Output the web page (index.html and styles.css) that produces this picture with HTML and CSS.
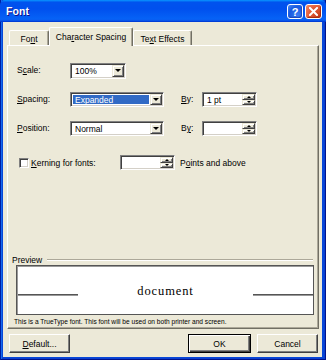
FILE: index.html
```html
<!DOCTYPE html>
<html>
<head>
<meta charset="utf-8">
<link rel="stylesheet" href="styles.css">
</head>
<body>
<div class="window">
  <div class="titlebar">
    <span class="title">Font</span>
    <div class="tb-buttons">
      <span class="tb-btn help">?</span>
      <span class="tb-btn close">
        <svg width="9" height="9" viewBox="0 0 9 9"><path d="M1 1 L8 8 M8 1 L1 8" stroke="#fff" stroke-width="2" stroke-linecap="square"/></svg>
      </span>
    </div>
  </div>
  <div class="body">
    <div class="tabs">
      <div class="tab tab-font">Fo<u>n</u>t</div>
      <div class="tab tab-char active">Cha<u>r</u>acter Spacing</div>
      <div class="tab tab-fx">Te<u>x</u>t Effects</div>
    </div>
    <div class="panel">
      <div class="form">
        <label class="lbl">S<u>c</u>ale:</label>
        <div class="combo combo-short"><span class="val">100%</span><span class="drop"><i class="tri-down"></i></span></div>
        <span></span><span></span><span></span>

        <label class="lbl"><u>S</u>pacing:</label>
        <div class="combo"><span class="val sel">Expanded</span><span class="drop"><i class="tri-down"></i></span></div>
        <span></span>
        <label class="lbl"><u>B</u>y:</label>
        <div class="spin"><span class="val">1 pt</span><span class="spin-btns"><span class="sb"><i class="tri-up"></i></span><span class="sb"><i class="tri-down"></i></span></span></div>

        <label class="lbl"><u>P</u>osition:</label>
        <div class="combo"><span class="val">Normal</span><span class="drop"><i class="tri-down"></i></span></div>
        <span></span>
        <label class="lbl">B<u>y</u>:</label>
        <div class="spin"><span class="val"></span><span class="spin-btns"><span class="sb"><i class="tri-up"></i></span><span class="sb"><i class="tri-down"></i></span></span></div>
      </div>

      <div class="kerning">
        <span class="check"></span>
        <label class="klbl"><u>K</u>erning for fonts:</label>
        <div class="spin"><span class="val"></span><span class="spin-btns"><span class="sb"><i class="tri-up"></i></span><span class="sb"><i class="tri-down"></i></span></span></div>
        <span class="plbl">P<u>o</u>ints and above</span>
      </div>

      <div class="preview-group">
        <div class="group-head"><span class="gtitle">Preview</span><span class="groove"></span></div>
        <div class="preview-box">
          <span class="pline"></span>
          <span class="doc">document</span>
          <span class="pline"></span>
        </div>
        <div class="note">This is a TrueType font. This font will be used on both printer and screen.</div>
      </div>
    </div>
    <div class="buttons">
      <button class="btn btn-default"><u>D</u>efault...</button>
      <span class="spacer"></span>
      <button class="btn btn-ok">OK</button>
      <button class="btn btn-cancel">Cancel</button>
    </div>
  </div>
</div>
</body>
</html>
```

FILE: styles.css
```css
html, body {
  margin: 0;
  padding: 0;
  background: #ffffff;
}
body {
  font-family: "Liberation Sans", Arial, sans-serif;
  font-size: 8.5px;
  color: #000;
}
u { text-decoration: underline; text-underline-offset: 1px; }

.window {
  width: 326px;
  height: 360px;
  box-sizing: border-box;
  display: flex;
  flex-direction: column;
  background: #0847d8;
  box-shadow: inset 1px 0 #001ea0, inset -1px -1px #00138c, inset 2px 0 #166aee, inset -2px -2px #0a3fd0;
}

.titlebar {
  height: 22px;
  flex: none;
  display: flex;
  align-items: center;
  justify-content: space-between;
  padding: 0 4px 0 6px;
  background: linear-gradient(180deg, #0997ff, #0053ee 10%, #0050ee 40%, #0662f6 85%, #0a5cf0 92%, #003dd7 97%, #003dd7);
  border-radius: 5px 5px 0 0;
}
.title {
  color: #fff;
  font-weight: bold;
  font-size: 10.5px;
  text-shadow: 1px 1px #0f1089;
  letter-spacing: 0.1px;
}
.tb-buttons {
  display: flex;
  gap: 2px;
  align-items: center;
  padding-top: 1px;
}
.tb-btn {
  width: 14px;
  height: 13px;
  border: 1px solid #fff;
  border-radius: 3px;
  display: flex;
  align-items: center;
  justify-content: center;
  color: #fff;
  font-weight: bold;
  font-size: 11px;
  font-family: "Liberation Sans", Arial, sans-serif;
}
.help {
  background: radial-gradient(circle at 70% 80%, #3a7bf2, #1759e0 60%, #4d8cf6);
  box-shadow: inset -1px -1px 1px #1d46b8;
  width: 14px;
}
.close {
  background: radial-gradient(circle at 80% 80%, #c8401e, #e45c37 55%, #f08c6a);
  box-shadow: inset -1px -1px 1px #a02a10;
  width: 15px;
}

.body {
  flex: 1;
  margin: 0 4px 3px 3px;
  background: #ece9d8;
  padding: 5px 3px 0 4px;
  display: flex;
  flex-direction: column;
}

.tabs {
  display: flex;
  align-items: flex-end;
  height: 18px;
  padding-left: 2px;
  position: relative;
  z-index: 2;
}
.tab {
  height: 15px;
  box-sizing: border-box;
  display: flex;
  align-items: center;
  justify-content: center;
  background: #ece9d8;
  border-top: 1px solid #fff;
  border-left: 1px solid #fff;
  border-right: 1px solid #716f64;
  box-shadow: inset -1px 0 #aca899;
  border-radius: 2px 2px 0 0;
  padding-top: 1px;
}
.tab-font { width: 40px; }
.tab-char { width: 84px; }
.tab-fx { width: 59px; }
.tab.active {
  height: 19px;
  margin-bottom: -1px;
  padding-bottom: 2px;
}

.panel {
  height: 284px;
  box-sizing: border-box;
  background: #ece9d8;
  border-top: 1px solid #fff;
  border-left: 1px solid #fff;
  border-right: 1px solid #716f64;
  border-bottom: 1px solid #716f64;
  box-shadow: inset -1px -1px #aca899;
  padding: 17px 4px 0 4px;
  display: flex;
  flex-direction: column;
}

.form {
  margin-left: 5px;
  display: grid;
  grid-template-columns: 53px 94px 17px 21px 55px;
  grid-auto-rows: 15px;
  row-gap: 14px;
  align-items: center;
}
.lbl { line-height: 15px; }

.combo, .spin {
  height: 15px;
  box-sizing: border-box;
  background: #fff;
  border: 1px solid;
  border-color: #808080 #fff #fff #808080;
  box-shadow: inset 1px 1px #404040, inset -1px -1px #d4d0c8;
  display: flex;
  align-items: stretch;
  padding: 1px;
}
.combo-short { width: 56px; height: 16px; }
.val {
  flex: 1;
  display: flex;
  align-items: center;
  padding-left: 2px;
  margin: 1px;
}
.val.sel {
  background: #316ac5;
  color: #fff;
}
.drop {
  width: 12px;
  flex: none;
  box-sizing: border-box;
  background: #ece9d8;
  border: 1px solid;
  border-color: #ece9d8 #404040 #404040 #ece9d8;
  box-shadow: inset 1px 1px #fff, inset -1px -1px #808080;
  display: flex;
  align-items: center;
  justify-content: center;
}
.tri-down, .tri-up {
  display: block;
  width: 0;
  height: 0;
  border-left: 3px solid transparent;
  border-right: 3px solid transparent;
}
.tri-down { border-top: 3px solid #000; }
.tri-up { border-bottom: 3px solid #000; }

.spin-btns {
  width: 13px;
  flex: none;
  display: flex;
  flex-direction: column;
}
.sb {
  flex: 1;
  box-sizing: border-box;
  background: #ece9d8;
  border: 1px solid;
  border-color: #ece9d8 #404040 #404040 #ece9d8;
  box-shadow: inset 1px 1px #fff, inset -1px -1px #808080;
  display: flex;
  align-items: center;
  justify-content: center;
}
.sb .tri-up, .sb .tri-down {
  border-left-width: 2px;
  border-right-width: 2px;
}
.sb .tri-up { border-bottom-width: 2px; }
.sb .tri-down { border-top-width: 2px; }

.kerning {
  margin-top: 19px;
  display: flex;
  align-items: center;
  height: 15px;
}
.check {
  width: 10px;
  height: 10px;
  box-sizing: border-box;
  margin-left: 7px;
  background: #fff;
  border: 1px solid;
  border-color: #808080 #fff #fff #808080;
  box-shadow: inset 1px 1px #404040, inset -1px -1px #d4d0c8;
}
.klbl {
  width: 89px;
  margin-left: 2px;
}
.kerning .spin { width: 55px; }
.plbl { margin-left: 5px; }

.preview-group {
  margin-top: auto;
  margin-bottom: 2px;
}
.group-head {
  display: flex;
  align-items: center;
  height: 10px;
}
.gtitle { width: 35px; }
.groove {
  flex: 1;
  height: 0;
  margin-right: 1px;
  border-top: 1px solid #aca899;
  border-bottom: 1px solid #fff;
}
.preview-box {
  margin: 0 0 0 4px;
  height: 50px;
  box-sizing: border-box;
  background: #fff;
  border: 1px solid #555;
  box-shadow: inset 1px 1px #9a9a9a;
  display: flex;
  align-items: flex-end;
  justify-content: space-between;
  padding: 0 0 18px 1px;
}
.pline {
  width: 60px;
  height: 1px;
  background: #555;
  border-bottom: 1px solid #999;
}
.doc {
  font-family: "Liberation Serif", "Times New Roman", serif;
  font-size: 12.5px;
  letter-spacing: 0.9px;
  line-height: 12px;
  margin-bottom: -1px;
  color: #000;
}
.note {
  font-size: 6.6px;
  margin: 2px 0 0 2px;
  line-height: 9px;
}

.buttons {
  display: flex;
  margin-top: 5px;
  padding: 0 1px 0 2px;
  gap: 6px;
}
.spacer { flex: 1; }
.btn {
  font-family: "Liberation Sans", Arial, sans-serif;
  font-size: 8.5px;
  color: #000;
  height: 19px;
  width: 61px;
  box-sizing: border-box;
  background: #ece9d8;
  border: 1px solid;
  border-color: #fff #404040 #404040 #fff;
  box-shadow: inset -1px -1px #808080;
  padding: 0;
  display: flex;
  align-items: center;
  justify-content: center;
}
.btn-ok {
  width: 63px;
  border: 1px solid #000;
  box-shadow: inset 1px 1px #fff, inset -1px -1px #404040, inset -2px -2px #808080;
}
```
